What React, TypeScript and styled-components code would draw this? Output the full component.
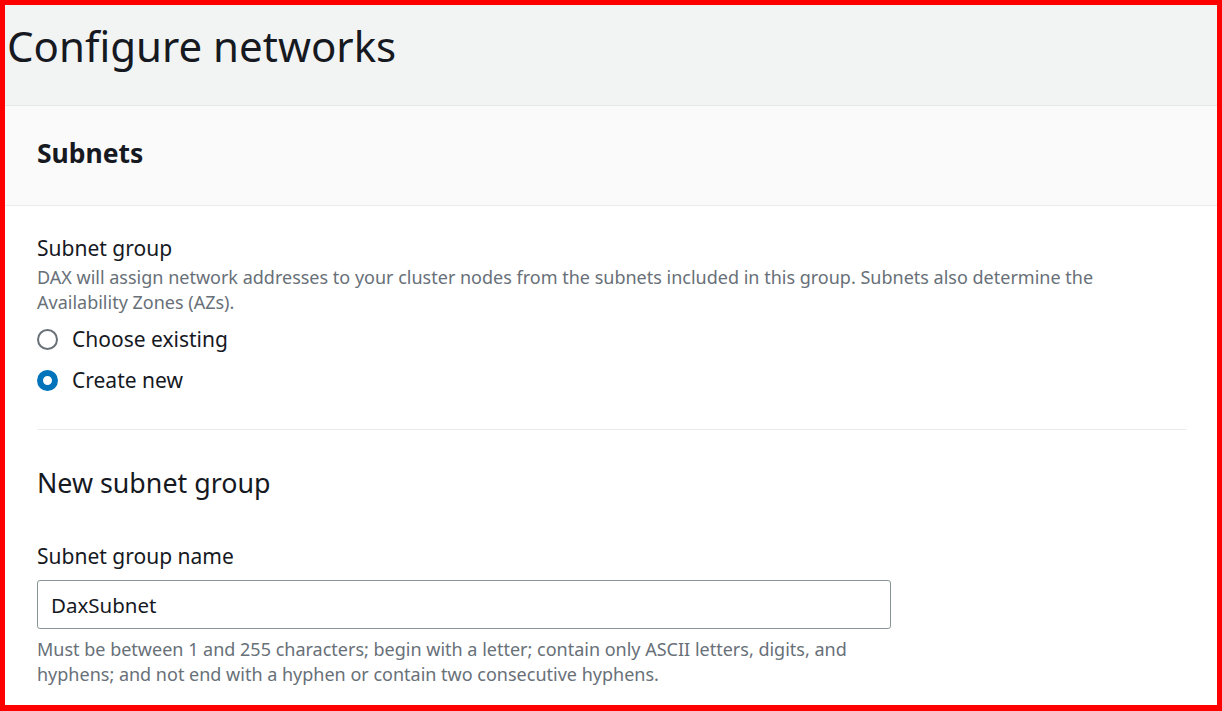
import React from 'react';
import styled, { createGlobalStyle } from 'styled-components';

const GlobalStyle = createGlobalStyle`
  html, body {
    margin: 0;
    padding: 0;
    background: #ffffff;
  }
  body {
    font-family: 'Noto Sans', 'Open Sans', sans-serif;
    color: #16191f;
  }
`;

const Frame = styled.div`
  box-sizing: border-box;
  width: 1222px;
  height: 711px;
  border: solid #ff0000;
  border-width: 5px 5px 6px 5px;
  overflow: hidden;
  background: #ffffff;
  display: flex;
  flex-direction: column;
`;

const PageHeader = styled.header`
  height: 101px;
  background: #f2f3f3;
  border-bottom: 1px solid #eaeded;
  display: flex;
  align-items: center;
  padding: 0 0 18px 2px;
  box-sizing: border-box;
`;

const Title = styled.h1`
  margin: 0;
  font-size: 42px;
  font-weight: 400;
  line-height: 50px;
  color: #16191f;
`;

const Panel = styled.section`
  flex: 1;
  display: flex;
  flex-direction: column;
  box-shadow: 1px 0 1px rgba(0, 28, 36, 0.15);
`;

const PanelHeader = styled.div`
  height: 100px;
  background: #fafafa;
  border-bottom: 1px solid #eaeded;
  display: flex;
  align-items: center;
  padding: 0 32px 5px;
  box-sizing: border-box;
`;

const PanelTitle = styled.h2`
  margin: 0;
  font-size: 26.5px;
  font-weight: 700;
  line-height: 34px;
`;

const PanelBody = styled.div`
  padding: 28px 30px 0 32px;
  display: flex;
  flex-direction: column;
`;

const Label = styled.div`
  font-size: 21px;
  line-height: 28px;
`;

const Description = styled.div`
  font-size: 18px;
  line-height: 25px;
  color: #687078;
  margin-top: 3px;
`;

const RadioList = styled.div`
  display: flex;
  flex-direction: column;
  gap: 13px;
  margin-top: 10px;
`;

const RadioRow = styled.label`
  display: flex;
  align-items: center;
  gap: 14px;
  font-size: 21px;
  line-height: 28px;
`;

const RadioDot = styled.span<{ $checked?: boolean }>`
  box-sizing: border-box;
  width: 21px;
  height: 21px;
  border-radius: 50%;
  border: ${(p) => (p.$checked ? '6.5px solid #0073bb' : '2px solid #687078')};
  background: #ffffff;
  flex-shrink: 0;
`;

const Divider = styled.hr`
  border: none;
  border-top: 1px solid #eaeded;
  margin: 35px 0 0;
  width: 100%;
`;

const SubHeading = styled.h3`
  margin: 36px 0 0;
  font-size: 26.8px;
  font-weight: 400;
  line-height: 34px;
`;

const FieldLabel = styled(Label)`
  margin-top: 42px;
`;

const Input = styled.div`
  box-sizing: border-box;
  width: 854px;
  height: 49px;
  margin-top: 10px;
  border: 1px solid #879596;
  border-radius: 3px;
  display: flex;
  align-items: center;
  padding: 0 13px;
  font-size: 20.5px;
`;

const Hint = styled(Description)`
  width: 854px;
  margin-top: 8px;
`;

export default function App() {
  return (
    <>
      <GlobalStyle />
      <Frame>
        <PageHeader>
          <Title>Configure networks</Title>
        </PageHeader>
        <Panel>
          <PanelHeader>
            <PanelTitle>Subnets</PanelTitle>
          </PanelHeader>
          <PanelBody>
            <Label>Subnet group</Label>
            <Description>
              DAX will assign network addresses to your cluster nodes from the subnets included in this group. Subnets also determine the Availability Zones (AZs).
            </Description>
            <RadioList>
              <RadioRow>
                <RadioDot />
                Choose existing
              </RadioRow>
              <RadioRow>
                <RadioDot $checked />
                Create new
              </RadioRow>
            </RadioList>
            <Divider />
            <SubHeading>New subnet group</SubHeading>
            <FieldLabel>Subnet group name</FieldLabel>
            <Input>DaxSubnet</Input>
            <Hint>
              Must be between 1 and 255 characters; begin with a letter; contain only ASCII letters, digits, and hyphens; and not end with a hyphen or contain two consecutive hyphens.
            </Hint>
          </PanelBody>
        </Panel>
      </Frame>
    </>
  );
}
